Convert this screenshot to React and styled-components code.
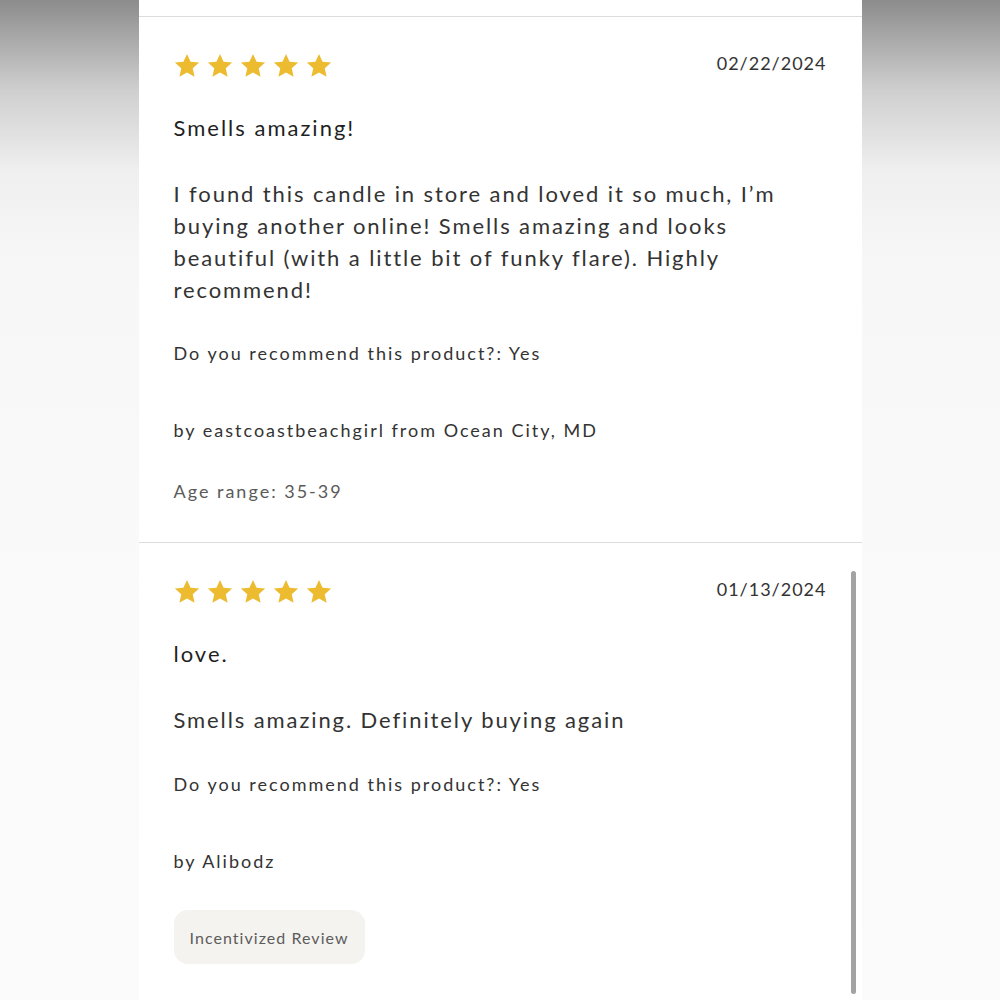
import React from 'react';
import styled, { createGlobalStyle } from 'styled-components';

const GlobalStyle = createGlobalStyle`
  html, body { margin: 0; padding: 0; }
  body {
    background: linear-gradient(180deg, #8c8c8c 0px, #cfcfcf 90px, #efefef 170px, #f7f7f7 260px, #fafafa 600px, #fbfbfb 1000px);
    font-family: "Lato", "Noto Sans", sans-serif;
    color: #2b2b2b;
  }
`;

const Page = styled.div`
  height: 1000px;
  overflow: hidden;
  display: flex;
  justify-content: center;
`;

const Panel = styled.div`
  position: relative;
  width: 723px;
  background: #ffffff;
  padding-top: 16px;
`;

const Review = styled.section`
  border-top: 1.5px solid #dcdcdc;
  padding: 0 35px;
  height: ${p => p.$h}px;
  box-sizing: border-box;
`;

const TopRow = styled.div`
  display: flex;
  justify-content: space-between;
  align-items: center;
  height: 26px;
  margin-top: 35px;
`;

const Stars = styled.div`
  display: flex;
  gap: 7px;
`;

const DateText = styled.span`
  font-size: 18px;
  letter-spacing: 1px;
  color: #333;
  margin-top: -4px;
`;

const Title = styled.h3`
  margin: 36px 0 0;
  font-size: 22px;
  font-weight: 400;
  letter-spacing: 2px;
  color: #1f1f1f;
  line-height: 28px;
`;

const Body = styled.p`
  margin: ${p => p.$mt}px 0 0;
  font-size: 22px;
  line-height: 32px;
  letter-spacing: 1.9px;
  color: #333;
`;

const Meta = styled.p`
  margin: ${p => p.$mt}px 0 0;
  font-size: 18px;
  line-height: 24px;
  letter-spacing: 2px;
  color: ${p => p.$muted ? '#5a5a5a' : '#333'};
`;

const Badge = styled.div`
  display: inline-flex;
  align-items: center;
  height: 54px;
  margin-top: 37px;
  padding: 0 16px;
  border-radius: 14px;
  background: #f4f3ef;
  font-size: 16px;
  letter-spacing: 1.05px;
  color: #5c5c5c;
`;

const ScrollThumb = styled.div`
  position: absolute;
  right: 6px;
  top: 571px;
  width: 5px;
  height: 423px;
  border-radius: 3px;
  background: #a3a3a3;
`;

const Star = () => (
  <svg width="26" height="25" viewBox="0 0 24 23">
    <path d="M12 0.8l3.3 7.2 7.9 0.8-5.9 5.3 1.7 7.8L12 17.9l-7 4 1.7-7.8L0.8 8.8l7.9-0.8z" fill="#ecbb2f" />
  </svg>
);

const StarRow = () => (
  <Stars>
    {[0, 1, 2, 3, 4].map(i => <Star key={i} />)}
  </Stars>
);

export default function App() {
  return (
    <Page>
      <GlobalStyle />
      <Panel>
        <Review $h={526}>
          <TopRow>
            <StarRow />
            <DateText>02/22/2024</DateText>
          </TopRow>
          <Title>Smells amazing!</Title>
          <Body $mt={36}>
            I found this candle in store and loved it so much, I’m buying another online! Smells amazing and looks beautiful (with a little bit of funky flare). Highly recommend!
          </Body>
          <Meta $mt={35}>Do you recommend this product?: Yes</Meta>
          <Meta $mt={53}>by eastcoastbeachgirl from Ocean City, MD</Meta>
          <Meta $mt={37} $muted>Age range: 35-39</Meta>
        </Review>
        <Review $h={460}>
          <TopRow>
            <StarRow />
            <DateText>01/13/2024</DateText>
          </TopRow>
          <Title>love.</Title>
          <Body $mt={36}>Smells amazing. Definitely buying again</Body>
          <Meta $mt={36}>Do you recommend this product?: Yes</Meta>
          <Meta $mt={53}>by Alibodz</Meta>
          <Badge>Incentivized Review</Badge>
        </Review>
        <ScrollThumb />
      </Panel>
    </Page>
  );
}
